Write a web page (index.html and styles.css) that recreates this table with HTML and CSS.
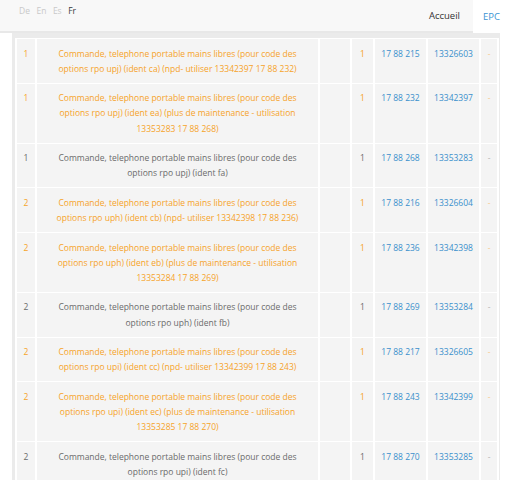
FILE: index.html
```html
<!DOCTYPE html>
<html lang="fr">
<head>
<meta charset="utf-8">
<title>EPC</title>
<link rel="stylesheet" href="styles.css">
</head>
<body>
<header class="topbar">
  <nav class="langs">
    <a class="lang">De</a>
    <a class="lang">En</a>
    <a class="lang">Es</a>
    <a class="lang lang-active">Fr</a>
  </nav>
  <nav class="menu">
    <a class="menu-item">Accueil</a>
    <a class="menu-item menu-item-active">EPC</a>
  </nav>
</header>
<main class="wrap">
  <table class="parts">
    <colgroup>
      <col class="c-pos"><col class="c-desc"><col class="c-empty"><col class="c-qty"><col class="c-ref"><col class="c-num"><col class="c-note">
    </colgroup>
    <tbody>
      <tr class="alt">
        <td>1</td><td class="desc">Commande, telephone portable mains libres (pour code des options rpo upj) (ident ca) (npd- utiliser 13342397 17 88 232)</td><td></td><td>1</td><td class="link">17 88 215</td><td class="link">13326603</td><td class="note">-</td>
      </tr>
      <tr class="alt">
        <td>1</td><td class="desc">Commande, telephone portable mains libres (pour code des options rpo upj) (ident ea) (plus de maintenance - utilisation 13353283 17 88 268)</td><td></td><td>1</td><td class="link">17 88 232</td><td class="link">13342397</td><td class="note">-</td>
      </tr>
      <tr>
        <td>1</td><td class="desc">Commande, telephone portable mains libres (pour code des options rpo upj) (ident fa)</td><td></td><td>1</td><td class="link">17 88 268</td><td class="link">13353283</td><td class="note">-</td>
      </tr>
      <tr class="alt">
        <td>2</td><td class="desc">Commande, telephone portable mains libres (pour code des options rpo uph) (ident cb) (npd- utiliser 13342398 17 88 236)</td><td></td><td>1</td><td class="link">17 88 216</td><td class="link">13326604</td><td class="note">-</td>
      </tr>
      <tr class="alt">
        <td>2</td><td class="desc">Commande, telephone portable mains libres (pour code des options rpo uph) (ident eb) (plus de maintenance - utilisation 13353284 17 88 269)</td><td></td><td>1</td><td class="link">17 88 236</td><td class="link">13342398</td><td class="note">-</td>
      </tr>
      <tr>
        <td>2</td><td class="desc">Commande, telephone portable mains libres (pour code des options rpo uph) (ident fb)</td><td></td><td>1</td><td class="link">17 88 269</td><td class="link">13353284</td><td class="note">-</td>
      </tr>
      <tr class="alt">
        <td>2</td><td class="desc">Commande, telephone portable mains libres (pour code des options rpo upi) (ident cc) (npd- utiliser 13342399 17 88 243)</td><td></td><td>1</td><td class="link">17 88 217</td><td class="link">13326605</td><td class="note">-</td>
      </tr>
      <tr class="alt">
        <td>2</td><td class="desc">Commande, telephone portable mains libres (pour code des options rpo upi) (ident ec) (plus de maintenance - utilisation 13353285 17 88 270)</td><td></td><td>1</td><td class="link">17 88 243</td><td class="link">13342399</td><td class="note">-</td>
      </tr>
      <tr>
        <td>2</td><td class="desc">Commande, telephone portable mains libres (pour code des options rpo upi) (ident fc)</td><td></td><td>1</td><td class="link">17 88 270</td><td class="link">13353285</td><td class="note">-</td>
      </tr>
    </tbody>
  </table>
</main>
</body>
</html>
```
FILE: styles.css
```css
html, body {
  margin: 0;
  padding: 0;
  background: #fff;
  font-family: "Open Sans", "Noto Sans", sans-serif;
  color: #666;
}

.topbar {
  position: relative;
  z-index: 2;
  display: flex;
  justify-content: space-between;
  align-items: stretch;
  height: 31px;
  background: #f8f8f8;
  border-bottom: 2px solid #e8e8e8;
}

.langs {
  display: flex;
  gap: 6.5px;
  padding: 4px 0 0 19px;
  font-size: 8.5px;
  line-height: 14px;
}

.lang {
  color: #c9c9c9;
}

.lang-active {
  color: #3a3a3a;
}

.menu {
  display: flex;
  align-items: stretch;
  font-size: 9.5px;
}

.menu-item {
  display: flex;
  align-items: center;
  padding: 0 13px 0 13px;
  color: #333;
}

.menu-item-active {
  padding: 0 12px 0 10px;
  margin-bottom: -2px;
  background: #fff;
  color: #3b95d3;
}

.wrap {
  display: block;
  margin: 0 12px 0 12px;
  padding: 5px 3px 0 3px;
  background: #ebebeb;
}

.parts {
  width: 482px;
  table-layout: fixed;
  border-collapse: collapse;
  font-size: 8.5px;
  line-height: 15.2px;
}

.c-pos { width: 20px; }
.c-desc { width: 283px; }
.c-empty { width: 32px; }
.c-qty { width: 23px; }
.c-ref { width: 53px; }
.c-num { width: 53px; }
.c-note { width: 18px; }

.parts td {
  background: #f4f4f4;
  border-top: 1px solid #fff;
  border-bottom: 1px solid #fff;
  border-left: 2px solid #fff;
  border-right: 2px solid #fff;
  padding: 6.5px 0 6.8px;
  text-align: center;
  vertical-align: top;
  color: #6b6b6b;
}

.parts td.desc {
  padding-left: 13px;
  padding-right: 13px;
}

.parts tr.alt td {
  color: #f6a32a;
}

.parts td.note {
  color: #b5b5b5;
}

.parts tr.alt td.note {
  color: #f8c98a;
}

.parts td.link,
.parts tr.alt td.link {
  color: #3a90cc;
}
```
